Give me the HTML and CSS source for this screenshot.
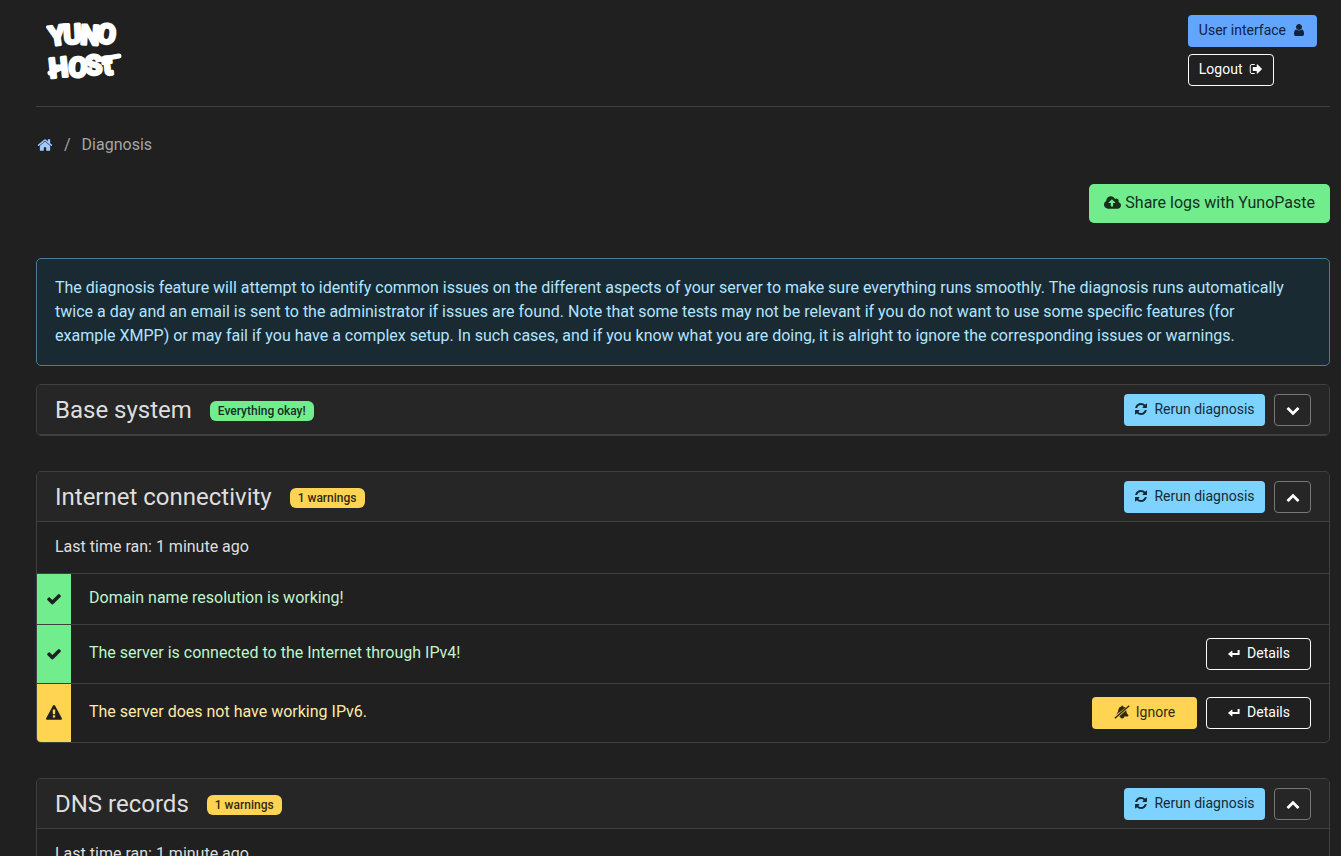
FILE: index.html
```html
<!DOCTYPE html>
<html lang="en">
<head>
  <meta charset="UTF-8" />
  <meta name="viewport" content="width=device-width, initial-scale=1.0"/>
  <title>Diagnosis | YunoHost Admin</title>
  <link rel="stylesheet" href="styles.css">
</head>
<body>
  <!-- Icon set -->
  <svg class="sprite" aria-hidden="true">
    <symbol id="user" viewBox="256 0 1280 1792"><path d="M1536 1399q0 109-62.5 187t-150.5 78h-854q-88 0-150.5-78t-62.5-187q0-85 8.5-160.5t31.5-152 58.5-131 94-89 134.5-34.5q131 128 313 128t313-128q76 0 134.5 34.5t94 89 58.5 131 31.5 152 8.5 160.5zm-256-887q0 159-112.5 271.5t-271.5 112.5-271.5-112.5-112.5-271.5 112.5-271.5 271.5-112.5 271.5 112.5 112.5 271.5z"/></symbol>
    <symbol id="sign-out" viewBox="64 0 1600 1792"><path d="M704 1440q0 4 1 20t.5 26.5-3 23.5-10 19.5-20.5 6.5h-320q-119 0-203.5-84.5t-84.5-203.5v-704q0-119 84.5-203.5t203.5-84.5h320q13 0 22.5 9.5t9.5 22.5q0 4 1 20t.5 26.5-3 23.5-10 19.5-20.5 6.5h-320q-66 0-113 47t-47 113v704q0 66 47 113t113 47h312l11.5 1 11.5 3 8 5.5 7 9 2 13.5zm928-544q0 26-19 45l-544 544q-19 19-45 19t-45-19-19-45v-288h-448q-26 0-45-19t-19-45v-384q0-26 19-45t45-19h448v-288q0-26 19-45t45-19 45 19l544 544q19 19 19 45z"/></symbol>
    <symbol id="home" viewBox="64 0 1664 1792"><path d="M1472 992v480q0 26-19 45t-45 19h-384v-384h-256v384h-384q-26 0-45-19t-19-45v-480q0-1 .5-3t.5-3l575-474 575 474q1 2 1 6zm223-69l-62 74q-8 9-21 11h-3q-13 0-21-7l-692-577-692 577q-12 8-24 7-13-2-21-11l-62-74q-8-10-7-23.5t11-21.5l719-599q32-26 76-26t76 26l244 204v-195q0-14 9-23t23-9h192q14 0 23 9t9 23v408l219 182q10 8 11 21.5t-7 23.5z"/></symbol>
    <symbol id="cloud" viewBox="-64 0 1920 1792"><path d="M1216 864q0-14-9-23l-352-352q-9-9-23-9t-23 9l-351 351q-10 12-10 24 0 14 9 23t23 9h224v352q0 13 9.5 22.5t22.5 9.5h192q13 0 22.5-9.5t9.5-22.5v-352h224q13 0 22.5-9.5t9.5-22.5zm640 288q0 159-112.5 271.5t-271.5 112.5h-1088q-185 0-316.5-131.5t-131.5-316.5q0-130 70-240t188-165q-2-30-2-43 0-212 150-362t362-150q156 0 285.5 87t188.5 231q71-62 166-62 106 0 181 75t75 181q0 76-41 138 130 31 213.5 135.5t83.5 238.5z"/></symbol>
    <symbol id="refresh" viewBox="128 0 1536 1792"><path d="M1639 1056q0 5-1 7-64 268-268 434.5t-478 166.5q-146 0-282.5-55t-243.5-157l-129 129q-19 19-45 19t-45-19-19-45v-448q0-26 19-45t45-19h448q26 0 45 19t19 45-19 45l-137 137q71 66 161 102t187 36q134 0 250-65t186-179q11-17 53-117 8-23 30-23h192q13 0 22.5 9.5t9.5 22.5zm25-800v448q0 26-19 45t-45 19h-448q-26 0-45-19t-19-45 19-45l138-138q-148-137-349-137-134 0-250 65t-186 179q-11 17-53 117-8 23-30 23h-199q-13 0-22.5-9.5t-9.5-22.5v-7q65-268 270-434.5t480-166.5q146 0 284 55.5t245 156.5l130-129q19-19 45-19t45 19 19 45z"/></symbol>
    <symbol id="chevron-down" viewBox="0 0 1792 1792"><path d="M1683 808l-742 741q-19 19-45 19t-45-19l-742-741q-19-19-19-45.5t19-45.5l166-165q19-19 45-19t45 19l531 531 531-531q19-19 45-19t45 19l166 165q19 19 19 45.5t-19 45.5z"/></symbol>
    <symbol id="chevron-up" viewBox="0 0 1792 1792"><path d="M1683 1331l-166 165q-19 19-45 19t-45-19l-531-531-531 531q-19 19-45 19t-45-19l-166-165q-19-19-19-45.5t19-45.5l742-741q19-19 45-19t45 19l742 741q19 19 19 45.5t-19 45.5z"/></symbol>
    <symbol id="check" viewBox="0 0 1792 1792"><path d="M1671 566q0 40-28 68l-724 724-136 136q-28 28-68 28t-68-28l-136-136-362-362q-28-28-28-68t28-68l136-136q28-28 68-28t68 28l294 295 656-657q28-28 68-28t68 28l136 136q28 28 28 68z"/></symbol>
    <symbol id="warning" viewBox="0 0 1792 1792"><path d="M1024 1375v-190q0-14-9.5-23.5t-22.5-9.5h-192q-13 0-22.5 9.5t-9.5 23.5v190q0 14 9.5 23.5t22.5 9.5h192q13 0 22.5-9.5t9.5-23.5zm-2-374l18-459q0-12-10-19-13-11-24-11h-220q-11 0-24 11-10 7-10 21l17 457q0 10 10 16.5t24 6.5h185q14 0 23.5-6.5t10.5-16.5zm-14-934l768 1408q35 63-2 126-17 29-46.5 46t-63.5 17h-1536q-34 0-63.5-17t-46.5-46q-37-63-2-126l768-1408q17-31 47-49t65-18 65 18 47 49z"/></symbol>
    <symbol id="level-down" viewBox="0 0 14 14"><path d="M10.6 4h2v4.6q0 .5-.5.5H5.4v1.8q0 .6-.6.3L1.2 8.3q-.3-.3 0-.6l3.6-2.9q.6-.3.6.3v1.8h5.2z"/></symbol>
    <symbol id="bell-slash" viewBox="0 0 16 14"><path d="M.3 12.8L14.8.3l.9.9L1.3 13.7zM2.2 9.8Q4.3 7.6 4.3 4.8 4.8 2 7.3 1.6 7.3.6 8.1.6t.8 1q1.6.2 2.6 1.1zM12.2 5.2Q12.2 8.2 14.4 10.2q.1 1.3-1 1.3h-3q-.2 2-2.2 2-1.6 0-2-1.6l-1-.6z"/></symbol>
  </svg>

  <div class="container">
    <header class="navbar">
      <a href="#" class="logo" aria-label="YunoHost">
        <svg width="80" height="72" viewBox="0 0 80 72">
          <text x="4 18 34 50" y="31 29 29 27" rotate="-8 -3 3 8">YUNO</text>
          <text x="4 22 40 58" y="63 61 60 60" rotate="-6 4 -4 -6">HOSt</text>
          <path d="M56 44l17-3M4 58l9-4"/>
        </svg>
      </a>
      <nav class="nav-links">
        <a href="#" class="btn btn-sm btn-primary">User interface <svg class="icon"><use href="#user"/></svg></a>
        <button type="button" class="btn btn-sm btn-outline">Logout <svg class="icon"><use href="#sign-out"/></svg></button>
      </nav>
    </header>

    <nav class="breadcrumb" aria-label="breadcrumb">
      <a href="#" aria-label="Home"><svg class="icon"><use href="#home"/></svg></a>
      <span>/</span>
      <span>Diagnosis</span>
    </nav>

    <main>
      <div class="actions">
        <button type="button" class="btn btn-success"><svg class="icon"><use href="#cloud"/></svg> Share logs with YunoPaste</button>
      </div>

      <p class="alert">The diagnosis feature will attempt to identify common issues on the different aspects of your server to make sure everything runs smoothly. The diagnosis runs automatically twice a day and an email is sent to the administrator if issues are found. Note that some tests may not be relevant if you do not want to use some specific features (for example XMPP) or may fail if you have a complex setup. In such cases, and if you know what you are doing, it is alright to ignore the corresponding issues or warnings.</p>

      <section class="card">
        <div class="card-header">
          <h2>Base system</h2>
          <span class="badge badge-success">Everything okay!</span>
          <div class="card-buttons">
            <button type="button" class="btn btn-sm btn-info"><svg class="icon"><use href="#refresh"/></svg> Rerun diagnosis</button>
            <button type="button" class="btn btn-sm btn-toggle" aria-label="Expand"><svg class="icon"><use href="#chevron-down"/></svg></button>
          </div>
        </div>
      </section>

      <section class="card">
        <div class="card-header">
          <h2>Internet connectivity</h2>
          <span class="badge badge-warning">1 warnings</span>
          <div class="card-buttons">
            <button type="button" class="btn btn-sm btn-info"><svg class="icon"><use href="#refresh"/></svg> Rerun diagnosis</button>
            <button type="button" class="btn btn-sm btn-toggle" aria-label="Collapse"><svg class="icon"><use href="#chevron-up"/></svg></button>
          </div>
        </div>
        <p class="last-time">Last time ran: 1 minute ago</p>
        <ul class="list">
          <li class="item item-success">
            <span class="status"><svg class="icon"><use href="#check"/></svg></span>
            <p>Domain name resolution is working!</p>
          </li>
          <li class="item item-success">
            <span class="status"><svg class="icon"><use href="#check"/></svg></span>
            <p>The server is connected to the Internet through IPv4!</p>
            <div class="item-buttons">
              <button type="button" class="btn btn-sm btn-outline"><svg class="icon"><use href="#level-down"/></svg> Details</button>
            </div>
          </li>
          <li class="item item-warning">
            <span class="status"><svg class="icon"><use href="#warning"/></svg></span>
            <p>The server does not have working IPv6.</p>
            <div class="item-buttons">
              <button type="button" class="btn btn-sm btn-warning"><svg class="icon"><use href="#bell-slash"/></svg> Ignore</button>
              <button type="button" class="btn btn-sm btn-outline"><svg class="icon"><use href="#level-down"/></svg> Details</button>
            </div>
          </li>
        </ul>
      </section>

      <section class="card">
        <div class="card-header">
          <h2>DNS records</h2>
          <span class="badge badge-warning">1 warnings</span>
          <div class="card-buttons">
            <button type="button" class="btn btn-sm btn-info"><svg class="icon"><use href="#refresh"/></svg> Rerun diagnosis</button>
            <button type="button" class="btn btn-sm btn-toggle" aria-label="Collapse"><svg class="icon"><use href="#chevron-up"/></svg></button>
          </div>
        </div>
        <p class="last-time">Last time ran: 1 minute ago</p>
      </section>
    </main>
  </div>
</body>
</html>
```
FILE: styles.css
```css
* {
  box-sizing: border-box;
}
body {
  margin: 0;
  font-family: Roboto, sans-serif;
  font-size: 16px;
  line-height: 24px;
  color: #dedede;
  background: #202020;
}
h2, p, ul {
  margin: 0;
  padding: 0;
}
.sprite {
  position: absolute;
  width: 0;
  height: 0;
}
.container {
  padding: 0 11px 0 36px;
}
.icon {
  width: 14px;
  height: 14px;
  fill: currentColor;
  flex: none;
}

/* Header */
.navbar {
  display: flex;
  justify-content: space-between;
  align-items: flex-start;
  height: 107px;
  padding: 15px 13px 0 10px;
  border-bottom: 1px solid #404040;
}
.logo svg {
  display: block;
}
.logo text {
  font-family: Roboto, sans-serif;
  font-size: 27px;
  font-weight: 700;
  fill: #fff;
  stroke: #fff;
  stroke-width: 3;
  stroke-linejoin: round;
}
.logo path {
  stroke: #fff;
  stroke-width: 5;
  stroke-linecap: round;
}
.nav-links {
  display: flex;
  flex-direction: column;
  align-items: flex-start;
  gap: 7px;
}

/* Buttons */
.btn {
  display: inline-flex;
  align-items: center;
  justify-content: center;
  gap: 4px;
  height: 39px;
  padding: 0 14px 1px;
  border: 1px solid transparent;
  border-radius: 5px;
  font-family: inherit;
  font-size: 16px;
  line-height: 24px;
  text-decoration: none;
  white-space: nowrap;
  cursor: pointer;
}
.btn-sm {
  gap: 6px;
  height: 32px;
  padding: 0 10px 2px;
  border-radius: 4px;
  font-size: 14px;
  line-height: 20px;
}
.btn-primary {
  background: #61a5ff;
  color: #13213a;
}
.btn-success {
  background: #72ed8e;
  color: #16301c;
}
.btn-success .icon {
  width: 17px;
  height: 16px;
}
.btn-info {
  width: 141px;
  background: #7ed2ff;
  color: #152a36;
}
.btn-warning {
  background: #ffd452;
  color: #332a10;
}
.btn-warning .icon {
  width: 16px;
}
.btn-outline {
  background: none;
  border-color: #fff;
  color: #fff;
}
.btn-toggle {
  width: 37px;
  padding-bottom: 0;
  background: none;
  border-color: #777;
  color: #fff;
}

.breadcrumb {
  display: flex;
  align-items: center;
  gap: 11px;
  padding: 26px 0 0 1px;
  color: #a5a5a5;
}
.breadcrumb a {
  display: flex;
  color: #a0c9ff;
}
.breadcrumb .icon {
  width: 16px;
  height: 16px;
}
.actions {
  display: flex;
  justify-content: flex-end;
  padding: 27px 0 35px;
}
.alert {
  margin-bottom: 18px;
  padding: 17px 40px 17px 18px;
  border: 1px solid #4d7c91;
  border-radius: 5px;
  background: #1a2a33;
  color: #b2e4ff;
}

/* Cards */
.card {
  margin-bottom: 35px;
  border: 1px solid #404040;
  border-radius: 5px;
  overflow: hidden;
}
.card-header {
  display: flex;
  align-items: center;
  height: 50px;
  padding: 0 18px;
  background: #262626;
  border-bottom: 1px solid #404040;
}
.card-header h2 {
  font-size: 24px;
  line-height: 28px;
  font-weight: 400;
}
.badge {
  margin: 3px 0 0 18px;
  padding: 0 8px;
  border-radius: 6px;
  font-size: 12px;
  line-height: 20px;
  font-weight: 500;
}
.badge-success {
  background: #72ed8e;
  color: #16301c;
}
.badge-warning {
  background: #ffd452;
  color: #332a10;
}
.card-buttons {
  display: flex;
  gap: 9px;
  margin-left: auto;
}
.last-time {
  padding: 13px 18px 14px;
}
.list {
  list-style: none;
}
.item {
  display: flex;
  align-items: center;
  min-height: 51px;
  border-top: 1px solid #404040;
}
.item p {
  flex: 1;
  padding: 0 18px 2px;
}
.item-success p {
  color: #bff5cb;
}
.item-warning p {
  color: #ffe9a6;
}
.status {
  display: flex;
  align-items: center;
  justify-content: center;
  align-self: stretch;
  width: 34px;
  color: #202020;
}
.status .icon {
  width: 16px;
  height: 16px;
}
.item-success .status {
  background: #72ed8e;
}
.item-warning .status {
  background: #ffd452;
}
.item-buttons {
  display: flex;
  gap: 9px;
  padding: 13px 18px 13px 0;
}
.item-buttons .btn {
  width: 105px;
}
```
